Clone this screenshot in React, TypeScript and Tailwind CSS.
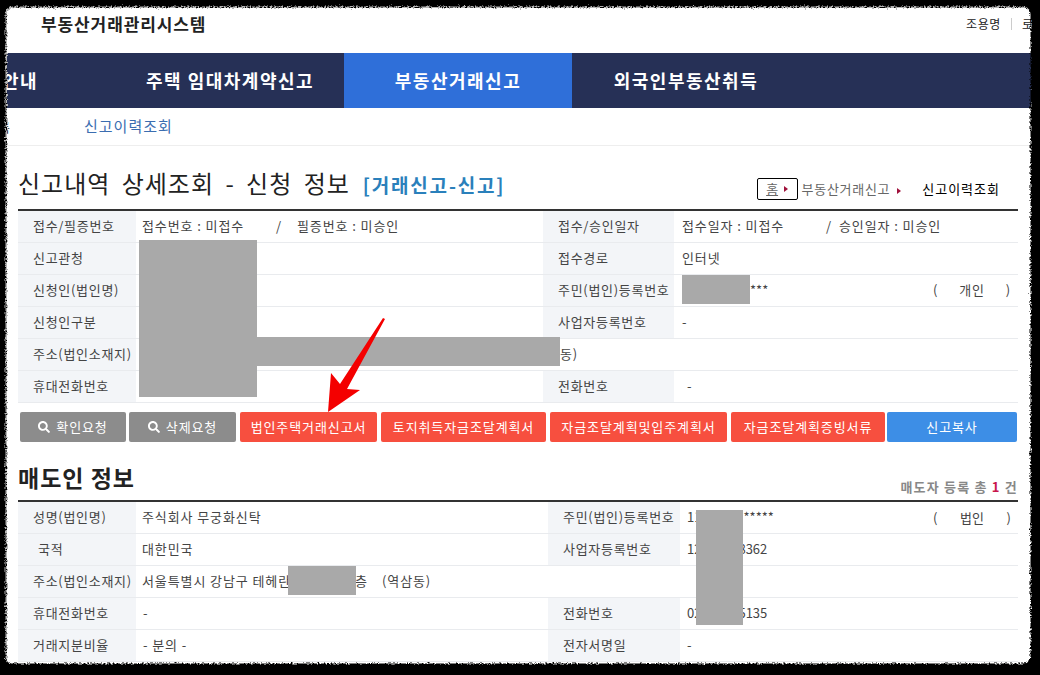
import React from 'react';
import { FaSearch } from 'react-icons/fa';

const font = { fontFamily: '"Noto Sans CJK KR", "Noto Sans", sans-serif' };

function Label({ children, className = '' }: { children?: React.ReactNode; className?: string }) {
  return (
    <div className={`flex items-center whitespace-nowrap border-b border-[#e9ebee] bg-[#f3f5f8] pb-[2px] pl-[15px] text-[13px] tracking-[0.7px] text-[#444] ${className}`}>
      {children}
    </div>
  );
}

function Value({ children, className = '' }: { children?: React.ReactNode; className?: string }) {
  return (
    <div className={`flex items-center whitespace-nowrap border-b border-[#e9ebee] pb-[2px] text-[13px] tracking-[0.9px] text-[#444] ${className}`}>
      {children}
    </div>
  );
}

function Kind({ text, low }: { text: string; low?: boolean }) {
  return (
    <div className={`ml-auto flex w-[85px] justify-between pr-[7px] ${low ? 'pt-[3px]' : ''}`}>
      <span>(</span>
      <span>{text}</span>
      <span>)</span>
    </div>
  );
}

function Btn({ w, color, search, children }: { w: string; color: string; search?: boolean; children: React.ReactNode }) {
  return (
    <button className={`flex h-[30px] items-center justify-center gap-[6px] whitespace-nowrap rounded-[2px] text-[13px] tracking-[0.9px] text-white ${w} ${color}`}>
      {search && <FaSearch className="text-[12px]" />}
      {children}
    </button>
  );
}

function Caret() {
  return <span className="inline-block h-0 w-0 border-y-[3px] border-l-[4px] border-y-transparent border-l-[#a0113c]" />;
}

function TornFrame() {
  const frame = 'M-30 -30H1070V705H-30Z M14 8H1024Q1032 8 1032 16V657Q1032 665 1024 665H14Q7 665 7 657V16Q7 8 14 8Z';
  return (
    <svg className="pointer-events-none absolute inset-0" width="1040" height="675" viewBox="0 0 1040 675">
      <defs>
        <filter id="torn" x="-5%" y="-5%" width="110%" height="110%">
          <feTurbulence type="fractalNoise" baseFrequency="0.55" numOctaves="2" seed="4" />
          <feDisplacementMap in="SourceGraphic" scale="5" xChannelSelector="R" yChannelSelector="G" />
        </filter>
      </defs>
      <path d={frame} fill="#b5b5b5" fillRule="evenodd" filter="url(#torn)" />
      <path d={frame} fill="#000" fillRule="evenodd" filter="url(#torn)" transform="translate(-1.5 -1.5)" />
    </svg>
  );
}

export default function App() {
  return (
    <div className="relative h-[675px] w-[1040px] overflow-hidden bg-black pb-[10px] pl-[7px] pr-[8px] pt-[8px]" style={font}>
      <div className="h-[657px] w-[1025px] overflow-hidden bg-white">
        {/* top bar */}
        <div className="flex h-[45px] items-center justify-between pb-[14px] pl-[34px]">
          <h1 className="text-[17px] font-bold tracking-[0.9px] text-[#222]">부동산거래관리시스템</h1>
          <div className="flex items-center text-[12px] tracking-[0.6px] text-[#222]">
            <span>조용명</span>
            <span className="mx-[10px] h-[12px] w-px bg-[#ccc]" />
            <span className="w-[10px] whitespace-nowrap">로</span>
          </div>
        </div>

        {/* main nav */}
        <nav className="flex h-[55px] bg-[#263056] text-[18px] font-bold tracking-[1.5px] text-white">
          <div className="flex w-[109px] justify-end overflow-hidden pr-[78px] leading-[55px]">
            <span className="whitespace-nowrap">안내</span>
          </div>
          <div className="w-[228px] text-center leading-[55px]">주택 임대차계약신고</div>
          <div className="w-[228px] bg-[#2f6fd9] text-center leading-[55px]">부동산거래신고</div>
          <div className="w-[228px] text-center leading-[55px]">외국인부동산취득</div>
        </nav>

        {/* sub nav */}
        <div className="flex h-[38px] items-center border-b border-[#eee] text-[15px] tracking-[1px] text-[#3b6db0]">
          <span className="-ml-[9px] w-[86px] text-[13px] text-[#222]">록</span>
          신고이력조회
        </div>

        <div className="pl-[11px] pr-[14px]">
          {/* title */}
          <div className="flex h-[65px] items-end justify-between border-b-2 border-[#333]">
            <div className="flex items-baseline pb-[10px]">
              <h2 className="text-[24px] leading-[32px] tracking-[1px] text-[#222] [word-spacing:5px]">신고내역 상세조회 - 신청 정보</h2>
              <span className="ml-[13px] text-[19px] font-bold tracking-[1.8px] text-[#2a80bb]">[거래신고-신고]</span>
            </div>
            <div className="flex items-center pb-[9px] text-[13px] text-[#666]">
              <div className="flex h-[22px] w-[41px] items-center justify-center gap-[6px] rounded-[2px] border border-black">
                <span className="underline">홈</span>
                <Caret />
              </div>
              <span className="ml-[4px] tracking-[0.7px]">부동산거래신고</span>
              <span className="ml-[7px]"><Caret /></span>
              <span className="ml-[21px] mr-[18px] tracking-[1px] text-black">신고이력조회</span>
            </div>
          </div>

          {/* application table */}
          <div className="grid grid-cols-[118px_407px_131px_344px] auto-rows-[32px]">
            <Label>접수/필증번호</Label>
            <Value className="pl-[6px]">
              <span className="w-[134px]">접수번호 : 미접수</span>
              <span className="w-[21px]">/</span>
              <span>필증번호 : 미승인</span>
            </Value>
            <Label>접수/승인일자</Label>
            <Value className="pl-[8px]">
              <span className="w-[144px]">접수일자 : 미접수</span>
              <span className="w-[13px]">/</span>
              <span>승인일자 : 미승인</span>
            </Value>

            <Label>신고관청</Label>
            <Value />
            <Label>접수경로</Label>
            <Value className="pl-[8px]">인터넷</Value>

            <Label>신청인(법인명)</Label>
            <Value />
            <Label>주민(법인)등록번호</Label>
            <Value className="pl-[8px]">
              <span className="ml-[68px] tracking-normal">***</span>
              <Kind text="개인" />
            </Value>

            <Label>신청인구분</Label>
            <Value />
            <Label>사업자등록번호</Label>
            <Value className="pl-[8px]">-</Value>

            <Label>주소(법인소재지)</Label>
            <Value className="col-span-3 pl-[424px]">동)</Value>

            <Label>휴대전화번호</Label>
            <Value />
            <Label>전화번호</Label>
            <Value className="pl-[13px]">-</Value>
          </div>

          {/* actions */}
          <div className="mt-[9px] flex pl-[2px]">
            <Btn w="w-[106px]" color="bg-[#8c8c8c]" search>확인요청</Btn>
            <div className="w-[3px]" />
            <Btn w="w-[107px]" color="bg-[#8c8c8c]" search>삭제요청</Btn>
            <div className="w-[4px]" />
            <Btn w="w-[137px]" color="bg-[#f74f3f]">법인주택거래신고서</Btn>
            <div className="w-[4px]" />
            <Btn w="w-[165px]" color="bg-[#f74f3f]">토지취득자금조달계획서</Btn>
            <div className="w-[4px]" />
            <Btn w="w-[177px]" color="bg-[#f74f3f]">자금조달계획및입주계획서</Btn>
            <div className="w-[4px]" />
            <Btn w="w-[154px]" color="bg-[#f74f3f]">자금조달계획증빙서류</Btn>
            <div className="w-[2px]" />
            <Btn w="w-[130px]" color="bg-[#3d8ee6]">신고복사</Btn>
          </div>

          {/* seller */}
          <div className="flex h-[60px] items-end justify-between border-b-2 border-[#333]">
            <h2 className="pb-[7px] text-[23px] font-bold leading-[32px] tracking-[1px] text-[#222]">매도인 정보</h2>
            <div className="pb-[4px] text-[13px] font-bold tracking-[1.2px] text-[#888]">
              매도자 등록 총 <span className="text-[#c8164b]">1</span> 건
            </div>
          </div>

          <div className="grid grid-cols-[118px_412px_132px_338px] auto-rows-[32px]">
            <Label>성명(법인명)</Label>
            <Value className="pl-[6px]">주식회사 무궁화신탁</Value>
            <Label>주민(법인)등록번호</Label>
            <Value className="pl-[7px] tracking-normal">
              <span>11</span>
              <span className="ml-[36px]">******</span>
              <Kind text="법인" low />
            </Value>

            <Label className="pl-[20px]">국적</Label>
            <Value className="pl-[6px]">대한민국</Value>
            <Label>사업자등록번호</Label>
            <Value className="pl-[7px] tracking-normal">
              <span>12</span>
              <span className="ml-[37px]">8362</span>
            </Value>

            <Label>주소(법인소재지)</Label>
            <Value className="pl-[6px]">
              <span className="w-[146px] overflow-hidden">서울특별시 강남구 테헤란</span>
              <span className="ml-[59px]">2층</span>
              <span className="ml-[14px]">(역삼동)</span>
            </Value>
            <Value className="col-span-2" />

            <Label>휴대전화번호</Label>
            <Value className="pl-[7px]">-</Value>
            <Label>전화번호</Label>
            <Value className="pl-[7px] tracking-normal">
              <span>02</span>
              <span className="ml-[37px]">5135</span>
            </Value>

            <Label>거래지분비율</Label>
            <Value className="pl-[7px]">-&nbsp;분의&nbsp;-</Value>
            <Label>전자서명일</Label>
            <Value className="pl-[7px]">-</Value>
          </div>
        </div>
      </div>

      {/* redactions placed on the capture */}
      <div className="absolute left-[139px] top-[240px] h-[157px] w-[118px] bg-[#a9a9a9]" />
      <div className="absolute left-[257px] top-[337px] h-[29px] w-[303px] bg-[#a9a9a9]" />
      <div className="absolute left-[682px] top-[275px] h-[29px] w-[68px] bg-[#a9a9a9]" />
      <div className="absolute left-[696px] top-[510px] h-[115px] w-[47px] bg-[#a9a9a9]" />
      <div className="absolute left-[288px] top-[566px] h-[29px] w-[68px] bg-[#a9a9a9]" />

      {/* annotation arrow */}
      <svg className="absolute left-[320px] top-[315px]" width="70" height="100" viewBox="320 315 70 100">
        <path d="M385 319 L347 389 L360 390 L328 412 L331 373 L340 384 L383 318 Z" fill="#f40000" />
      </svg>

      <TornFrame />
    </div>
  );
}
